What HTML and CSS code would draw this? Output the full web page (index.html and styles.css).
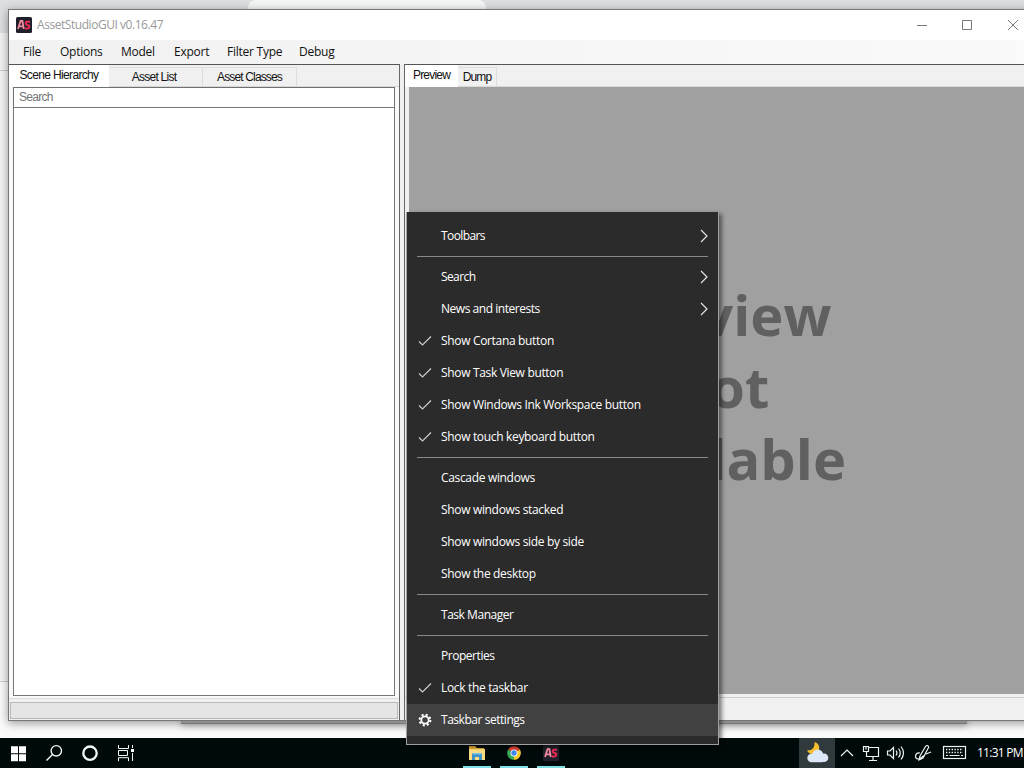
FILE: index.html
```html
<!DOCTYPE html>
<html lang="en">
<head>
<meta charset="utf-8">
<title>AssetStudioGUI v0.16.47</title>
<link rel="stylesheet" href="styles.css">
</head>
<body>
<svg class="defs" width="0" height="0">
  <symbol id="check" viewBox="0 0 14 12"><path d="M1 6.5 4.5 10 13 1.5" fill="none" stroke="#d0d0d0" stroke-width="1.1"/></symbol>
  <symbol id="chev" viewBox="0 0 8 14"><path d="M1 1 7 7 1 13" fill="none" stroke="#e4e4e4" stroke-width="1.2"/></symbol>
  <symbol id="as" viewBox="0 0 16 16"><rect width="16" height="16" rx="1.5" fill="#20202c"/><path d="M2 12 4.600 4H6.400L7.800 12M3.500 9.300H7.500" fill="none" stroke="#f08a9c" stroke-width="1.800"/><path d="M14 4.800H11.200Q9.700 4.800 9.700 6.300T11.300 8Q13.300 8.200 13.300 9.700T11.500 11.400H9" fill="none" stroke="#ec2855" stroke-width="2"/></symbol>
</svg>
<div class="desktop">
  <div class="backdrop"><div class="browser-tab"></div><div class="back-edge"></div></div>
  <main class="window">
    <header class="titlebar">
      <svg class="app-icon"><use href="#as"/></svg>
      <span class="title">AssetStudioGUI v0.16.47</span>
      <svg class="controls" viewBox="0 0 110 16"><g fill="none" stroke="#777"><path d="M8 8.5h10M53.5 3.5h9v9h-9z"/><path d="M99 3l10 10M109 3 99 13"/></g></svg>
    </header>
    <nav class="menubar"><span class="m1">File</span><span class="m2">Options</span><span class="m3">Model</span><span class="m4">Export</span><span class="m5">Filter Type</span><span class="m6">Debug</span></nav>
    <div class="panes">
      <section class="pane left">
        <div class="tabs"><span class="tab active t1">Scene Hierarchy</span><span class="tab t2">Asset List</span><span class="tab t3">Asset Classes</span></div>
        <div class="page"><div class="search">Search</div><div class="tree"></div></div>
        <div class="progress"></div>
      </section>
      <section class="pane right">
        <div class="tabs"><span class="tab active t4">Preview</span><span class="tab t5">Dump</span></div>
        <div class="preview"><div class="p1">Preview</div><div>Not</div><div>Available</div></div>
        <div class="status"></div>
      </section>
    </div>
  </main>
  <footer class="taskbar">
    <div class="start">
      <svg width="140" height="30" viewBox="0 0 140 30"><path d="M11 8.2h7v7h-7zM19 8.2h7v7h-7zM11 16.2h7v7h-7zM19 16.2h7v7h-7z" fill="#fff"/><g fill="none" stroke="#f4f8f8"><circle cx="56.3" cy="12.8" r="5.2" stroke-width="1.4"/><path d="M52.5 16.6 46.5 22.6" stroke-width="1.4"/><circle cx="90" cy="15.2" r="6.7" stroke-width="2.3"/><path d="M118.5 7v3.5h10V7M118.5 23.200v-3.500h10v3.500M118.500 12.500h9v5h-9zM132.500 7v3M132.500 15v8"/></g><path d="M131 11h3v3h-3z" fill="#fff"/></svg>
    </div>
    <div class="apps">
      <div class="app"><svg width="18" height="18" viewBox="0 0 18 18"><path d="M1 2h6l2 2h7v11H1z" fill="#e8ae36"/><path d="M1 5h16v11H1z" fill="#fbdc80"/><path d="M4 9.500h10V16h-3v-3H7v3H4z" fill="#3d93c8"/><path d="M5 9h8v1.500H5z" fill="#76c4ed"/></svg></div>
      <div class="app"><svg width="18" height="18" viewBox="0 0 18 18"><path d="M9 9 3.100 5.600A6.800 6.800 0 0 1 14.900 5.600Z" fill="#e34133"/><path d="M9 9 14.900 5.600A6.800 6.800 0 0 1 9 15.800Z" fill="#f8c728"/><path d="M9 9V15.800A6.800 6.800 0 0 1 3.100 5.600Z" fill="#36a852"/><circle cx="9" cy="9" r="3.500" fill="#fff"/><circle cx="9" cy="9" r="2.700" fill="#4084ee"/></svg></div>
      <div class="app"><svg width="16" height="16"><use href="#as"/></svg></div>
    </div>
    <div class="tray">
      <div class="weather"><svg width="36" height="30" viewBox="0 0 36 30"><path d="M15.500 4C16 9 13.500 12.500 8 12.500 10 17 18 18 20 12 21 8 19 5 15.500 4Z" fill="#f7bf2d"/><g fill="#dce7f7"><circle cx="12.500" cy="20" r="4.200"/><circle cx="18.700" cy="17" r="5.500"/><circle cx="25" cy="19.700" r="4.300"/><rect x="12" y="18" width="13" height="6.200" rx="2"/></g></svg></div>
      <svg class="tray-icons" width="140" height="30" viewBox="0 0 140 30"><g fill="none" stroke="#edf4f4" stroke-width="1.200"><path d="M6 18 12 12 18 18"/><path d="M34 9.500H43.500V18.500H31.500V14M38 19v3M34 22.500h8M28.500 8.500h5v5h-5zM31 8.500v3"/><path d="M52.500 13h2.500l3.500-3.500v11L55 17h-2.500zM61 12.500q2 2.500 0 5M63.500 10.500q3.500 4.500 0 9M66 8.500q5 6.500 0 13"/><path d="M85 15c-5-1-6 6-2 6 4 0 4-4 7-3M85 18 90.500 8.500q1.500-2 3 0 .500 1-.500 2L88 20 84 22ZM91 16l5-2"/></g><g stroke="#edf4f4" fill="none"><rect x="108.500" y="8.500" width="22" height="12" stroke-width="1.200"/><path d="M111 11.500h17M111 14.500h17" stroke-width="1.300" stroke-dasharray="1.400 1.400"/><path d="M111 17.500h2M114.500 17.500h10M126 17.500h2"/></g></svg>
      <span class="clock">11:31 PM</span>
    </div>
  </footer>
  <div class="menu">
    <div class="item tighter"><i></i><span>Toolbars</span><svg class="arrow"><use href="#chev"/></svg></div>
    <hr>
    <div class="item tighter"><i></i><span>Search</span><svg class="arrow"><use href="#chev"/></svg></div>
    <div class="item tight"><i></i><span>News and interests</span><svg class="arrow"><use href="#chev"/></svg></div>
    <div class="item"><i><svg><use href="#check"/></svg></i><span>Show Cortana button</span></div>
    <div class="item"><i><svg><use href="#check"/></svg></i><span>Show Task View button</span></div>
    <div class="item"><i><svg><use href="#check"/></svg></i><span>Show Windows Ink Workspace button</span></div>
    <div class="item"><i><svg><use href="#check"/></svg></i><span>Show touch keyboard button</span></div>
    <hr>
    <div class="item"><i></i><span>Cascade windows</span></div>
    <div class="item"><i></i><span>Show windows stacked</span></div>
    <div class="item"><i></i><span>Show windows side by side</span></div>
    <div class="item"><i></i><span>Show the desktop</span></div>
    <hr>
    <div class="item tight"><i></i><span>Task Manager</span></div>
    <hr>
    <div class="item tight"><i></i><span>Properties</span></div>
    <div class="item"><i><svg><use href="#check"/></svg></i><span>Lock the taskbar</span></div>
    <div class="item tight hover"><i><svg class="gear" viewBox="0 0 14 14"><circle cx="7" cy="7" r="3.700" fill="none" stroke="#fff" stroke-width="1.800"/><circle cx="7" cy="7" r="5.400" fill="none" stroke="#fff" stroke-width="2" stroke-dasharray="2.120 2.120"/></svg></i><span>Taskbar settings</span></div>
  </div>
</div>
</body>
</html>
```
FILE: styles.css
```css
* { box-sizing: border-box; }
body { margin: 0; overflow: hidden; font: 12px/16px "Open Sans", "Noto Sans", sans-serif; }
.defs { position: absolute; }
.desktop { position: relative; width: 1024px; height: 768px; overflow: hidden; display: flex; flex-direction: column; background: #f8f8f8; }
.backdrop { position: absolute; inset: 0 0 30px; background: linear-gradient(#dcdfe2 0 33px, #f2f2f2 33px 70px, #c8c8c8 70px 71px, #f4f4f4 71px 681px, #ccc 681px 682px, #fafafa 682px); }
.browser-tab { position: absolute; left: 248px; top: 0; width: 238px; height: 12px; background: #f5f6f6; border-radius: 8px 8px 0 0; }
.back-edge { position: absolute; left: 181px; top: 710px; width: 786px; height: 14px; background: #bbb; border-bottom: 1px solid #909090; box-shadow: 0 2px 7px #0004; }
.window { position: relative; flex: none; margin: 9px 0 0 8px; width: 1032px; height: 712px; display: flex; flex-direction: column; background: #f0f0f0; border: 1px solid #777; box-shadow: 0 2px 9px #0006; }
.titlebar { flex: none; height: 30px; display: flex; align-items: center; background: #fff; padding-left: 7px; }
.app-icon { width: 16px; height: 16px; }
.title { margin-left: 5px; color: #999; width: 128px; letter-spacing: -.45px; white-space: nowrap; }
.controls { width: 110px; height: 16px; margin-left: 744px; }
.menubar { flex: none; height: 24px; display: flex; align-items: center; background: linear-gradient(90deg, #f1f1f1, #fafafa); color: #111; letter-spacing: -.25px; white-space: nowrap; }
.m1 { width: 37px; margin-left: 14px; }
.m2 { width: 61px; }
.m3 { width: 53px; }
.m4 { width: 53px; }
.m5 { width: 72px; }
.panes { flex: 1; display: flex; gap: 4px; }
.pane { display: flex; flex-direction: column; border-top: 1px solid #555; }
.left { width: 391px; border-right: 1px solid #666; }
.right { flex: 1; border-left: 1px solid #666; }
.tabs { flex: none; height: 22px; display: flex; align-items: flex-end; border-bottom: 1px solid #d8d8d8; font: 12px/16px "Liberation Sans", sans-serif; color: #111; white-space: nowrap; }
.tab { height: 19px; padding-top: 1px; text-align: center; border: 1px solid #ddd; border-left: 0; border-bottom: 0; }
.tab.active { height: 22px; padding-top: 2px; margin-bottom: -1px; background: #fff; border: 0; }
.t1 { width: 100px; letter-spacing: -.65px; }
.t2 { width: 94px; letter-spacing: -.75px; padding-right: 3px; }
.t3 { width: 94px; letter-spacing: -.85px; }
.t4 { width: 53px; letter-spacing: -.8px; }
.t5 { width: 39px; letter-spacing: -.9px; }
.page { flex: none; height: 612px; display: flex; flex-direction: column; padding: 0 4px 2px; background: #f9f9f9; border-bottom: 1px solid #ddd; }
.search { height: 21px; padding: 1px 5px; font: 12px/16px "Liberation Sans", sans-serif; letter-spacing: -.7px; color: #757575; background: #fff; border: 1px solid #707070; }
.tree { flex: 1; background: #fff; border: 1px solid #777; margin-top: -1px; }
.progress { flex: none; height: 17px; margin: 3px 1px 1px; background: #e5e5e5; border: 1px solid #b8b8b8; }
.preview { flex: none; height: 607px; margin-left: 4px; padding: 191px 14px 0 0; background: #a0a0a0; color: #606060; font: 700 56px/72px "Open Sans", sans-serif; text-align: center; }
.p1 { padding-left: 5px; }
.status { flex: 1; margin-top: 3px; border-top: 1px solid #ccc; }
.taskbar { position: relative; margin-top: auto; height: 30px; display: flex; background: #010a0b; color: #fff; }
.start { width: 458px; flex: none; }
.apps { display: flex; flex: none; }
.app { width: 37px; height: 30px; display: flex; flex-direction: column; align-items: center; justify-content: center; background: linear-gradient(#7fe0e6, #7fe0e6) 50% 100% / 28px 2px no-repeat; }
.tray { display: flex; flex: none; margin-left: 230px; }
.weather { width: 36px; background: #303a3d; }
.clock { width: 47px; margin-left: 2px; padding-top: 7px; white-space: nowrap; letter-spacing: -.75px; }
.menu { position: absolute; left: 406px; top: 212px; width: 313px; height: 533px; padding: 8px 0 0; color: #fff; background: #2b2b2b; border: 1px solid #a0a0a0; border-top: 0; box-shadow: 3px 2px 4px #0007; }
.item { height: 32px; display: flex; align-items: center; white-space: nowrap; letter-spacing: -.33px; }
.tight { letter-spacing: -.46px; }
.tighter { letter-spacing: -.6px; }
.item i { width: 34px; height: 12px; padding-left: 11px; display: flex; align-items: center; }
.item i svg { width: 14px; height: 12px; }
.item i .gear { height: 14px; }
.item .arrow { width: 8px; height: 14px; margin: 0 10px 0 auto; }
.menu hr { height: 1px; margin: 4px 10px; border: 0; background: #888; }
.hover { background: #414141; }
```
